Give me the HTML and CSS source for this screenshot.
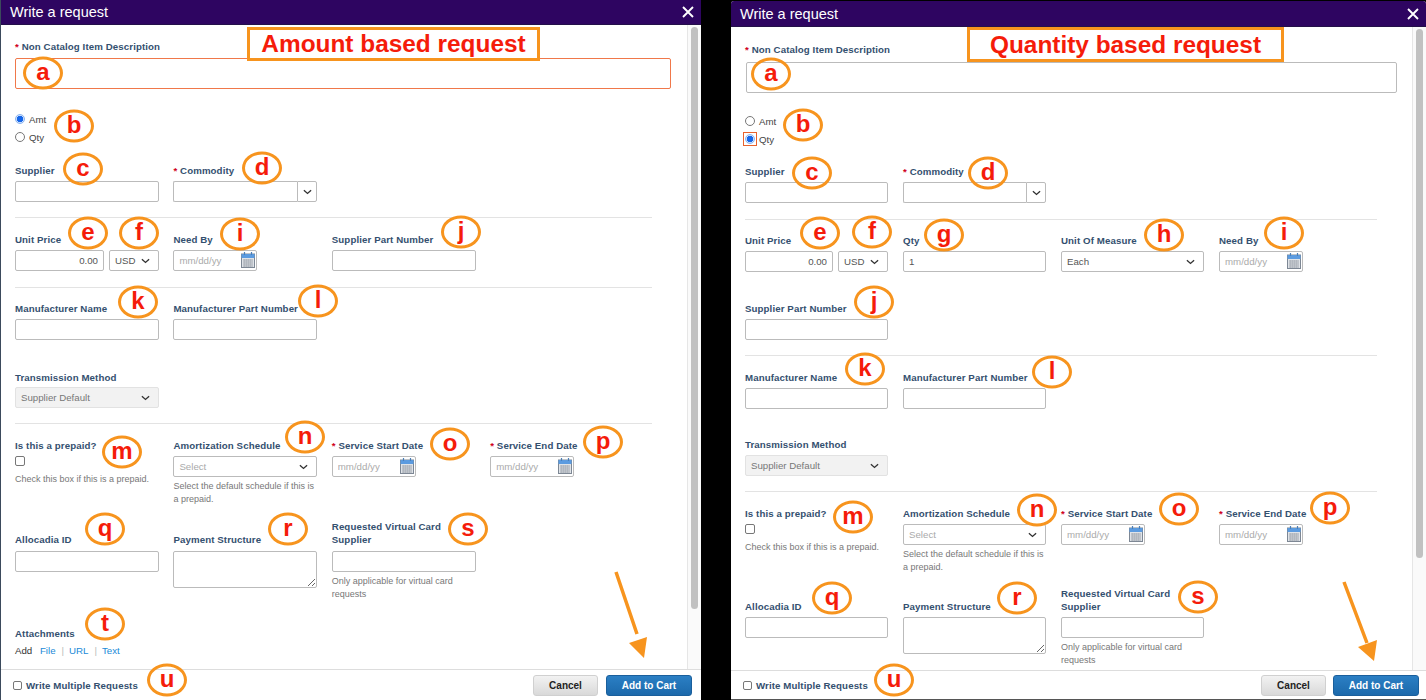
FILE: index.html
```html
<!DOCTYPE html>
<html lang="en">

<head>
  <meta charset="UTF-8">
  <title>Write a request</title>
  <link rel="stylesheet" href="styles.css">
</head>

<body>
  <svg width="0" height="0" class="defs">
    <symbol id="chev" viewBox="0 0 10 6">
      <path d="M1 1l4 3.6L9 1" fill="none" stroke="#333" stroke-width="1.5" />
    </symbol>
    <symbol id="cal" viewBox="0 0 14 16">
      <rect x=".5" y="2" width="13" height="13.5" fill="#dfe3e8" stroke="#7d8794" />
      <rect x=".5" y="2" width="13" height="4" fill="#5b9be0" />
      <path d="M3.5 0v3M10.5 0v3" stroke="#4a7fb8" stroke-width="1.2" />
      <path d="M2.5 8h9M2.5 10h9M2.5 12h9M2.5 14h9" stroke="#5c6570" stroke-dasharray="1.2 .8" />
    </symbol>
    <symbol id="x" viewBox="0 0 12 12">
      <path d="M1 1l10 10M11 1L1 11" fill="none" stroke="#fff" stroke-width="1.9" />
    </symbol>
  </svg>

  <div class="desk">
    <!-- amount based -->
    <section class="win win-left">
      <header class="win-head"><span>Write a request</span><svg class="close" width="12" height="12"><use href="#x" /></svg></header>
      <div class="win-body">
        <form class="form">
          <div class="field-wide">
            <label class="lbl"><i>*</i> Non Catalog Item Description</label>
            <input class="txt big err" type="text">
          </div>
          <div class="radios">
            <label><input type="radio" name="t1" checked> Amt</label>
            <label><input type="radio" name="t1"> Qty</label>
          </div>
          <div class="row r-supplier">
            <div class="field"><label class="lbl">Supplier</label><input class="txt" type="text"></div>
            <div class="field"><label class="lbl"><i>*</i> Commodity</label>
              <div class="combo"><input class="txt" type="text"><span class="combo-btn"><svg width="9" height="6"><use href="#chev" /></svg></span></div>
            </div>
          </div>
          <hr>
          <div class="row">
            <div class="field price">
              <label class="lbl">Unit Price</label>
              <div class="price-row"><input class="txt num" type="text" value="0.00">
                <div class="sel cur">USD<svg width="9" height="6"><use href="#chev" /></svg></div>
              </div>
            </div>
            <div class="field"><label class="lbl">Need By</label>
              <div class="date"><input class="txt" type="text" placeholder="mm/dd/yy"><svg width="14" height="16"><use href="#cal" /></svg></div>
            </div>
            <div class="field"><label class="lbl">Supplier Part Number</label><input class="txt" type="text"></div>
          </div>
          <hr class="hr-more">
          <div class="row snug">
            <div class="field"><label class="lbl">Manufacturer Name</label><input class="txt" type="text"></div>
            <div class="field"><label class="lbl">Manufacturer Part Number</label><input class="txt" type="text"></div>
          </div>
          <div class="row wide-gap">
            <div class="field"><label class="lbl tight">Transmission Method</label>
              <div class="sel off">Supplier Default<svg width="9" height="6"><use href="#chev" /></svg></div>
            </div>
          </div>
          <hr>
          <div class="row">
            <div class="field"><label class="lbl">Is this a prepaid?</label>
              <input class="check" type="checkbox">
              <p class="help">Check this box if this is a prepaid.</p>
            </div>
            <div class="field"><label class="lbl">Amortization Schedule</label>
              <div class="sel hint">Select<svg width="9" height="6"><use href="#chev" /></svg></div>
              <p class="help">Select the default schedule if this is a prepaid.</p>
            </div>
            <div class="field"><label class="lbl"><i>*</i> Service Start Date</label>
              <div class="date"><input class="txt" type="text" placeholder="mm/dd/yy"><svg width="14" height="16"><use href="#cal" /></svg></div>
            </div>
            <div class="field"><label class="lbl"><i>*</i> Service End Date</label>
              <div class="date"><input class="txt" type="text" placeholder="mm/dd/yy"><svg width="14" height="16"><use href="#cal" /></svg></div>
            </div>
          </div>
          <div class="row tall">
            <div class="field"><label class="lbl">Allocadia ID</label><input class="txt" type="text"></div>
            <div class="field"><label class="lbl">Payment Structure</label><textarea class="area"></textarea></div>
            <div class="field"><label class="lbl">Requested Virtual Card Supplier</label><input class="txt" type="text">
              <p class="help">Only applicable for virtual card requests</p>
            </div>
          </div>
          <div class="attach">
            <label class="lbl">Attachments</label>
            <p class="attach-links">Add <a href="#">File</a><b>|</b><a href="#">URL</a><b>|</b><a href="#">Text</a></p>
          </div>
        </form>
        <aside class="track"><div class="thumb"></div></aside>
      </div>
      <footer class="win-foot">
        <label class="multi"><input class="check" type="checkbox"> Write Multiple Requests</label>
        <div class="btns"><button class="btn" type="button">Cancel</button><button class="btn primary" type="button">Add to Cart</button></div>
      </footer>
    </section>

    <!-- quantity based -->
    <section class="win win-right">
      <header class="win-head"><span>Write a request</span><svg class="close" width="12" height="12"><use href="#x" /></svg></header>
      <div class="win-body">
        <form class="form">
          <div class="field-wide">
            <label class="lbl"><i>*</i> Non Catalog Item Description</label>
            <input class="txt big" type="text">
          </div>
          <div class="radios">
            <label><input type="radio" name="t2"> Amt</label>
            <label><span class="focus-box"><input type="radio" name="t2" checked></span> Qty</label>
          </div>
          <div class="row r-supplier">
            <div class="field"><label class="lbl">Supplier</label><input class="txt" type="text"></div>
            <div class="field"><label class="lbl"><i>*</i> Commodity</label>
              <div class="combo"><input class="txt" type="text"><span class="combo-btn"><svg width="9" height="6"><use href="#chev" /></svg></span></div>
            </div>
          </div>
          <hr class="hr-more">
          <div class="row snug">
            <div class="field price">
              <label class="lbl">Unit Price</label>
              <div class="price-row"><input class="txt num" type="text" value="0.00">
                <div class="sel cur">USD<svg width="9" height="6"><use href="#chev" /></svg></div>
              </div>
            </div>
            <div class="field"><label class="lbl">Qty</label><input class="txt" type="text" value="1"></div>
            <div class="field"><label class="lbl">Unit Of Measure</label>
              <div class="sel">Each<svg width="9" height="6"><use href="#chev" /></svg></div>
            </div>
            <div class="field"><label class="lbl">Need By</label>
              <div class="date"><input class="txt" type="text" placeholder="mm/dd/yy"><svg width="14" height="16"><use href="#cal" /></svg></div>
            </div>
          </div>
          <div class="row wide-gap">
            <div class="field"><label class="lbl">Supplier Part Number</label><input class="txt" type="text"></div>
          </div>
          <hr>
          <div class="row">
            <div class="field"><label class="lbl">Manufacturer Name</label><input class="txt" type="text"></div>
            <div class="field"><label class="lbl">Manufacturer Part Number</label><input class="txt" type="text"></div>
          </div>
          <div class="row mid-gap">
            <div class="field"><label class="lbl">Transmission Method</label>
              <div class="sel off">Supplier Default<svg width="9" height="6"><use href="#chev" /></svg></div>
            </div>
          </div>
          <hr>
          <div class="row">
            <div class="field"><label class="lbl">Is this a prepaid?</label>
              <input class="check" type="checkbox">
              <p class="help">Check this box if this is a prepaid.</p>
            </div>
            <div class="field"><label class="lbl">Amortization Schedule</label>
              <div class="sel hint">Select<svg width="9" height="6"><use href="#chev" /></svg></div>
              <p class="help">Select the default schedule if this is a prepaid.</p>
            </div>
            <div class="field"><label class="lbl"><i>*</i> Service Start Date</label>
              <div class="date"><input class="txt" type="text" placeholder="mm/dd/yy"><svg width="14" height="16"><use href="#cal" /></svg></div>
            </div>
            <div class="field"><label class="lbl"><i>*</i> Service End Date</label>
              <div class="date"><input class="txt" type="text" placeholder="mm/dd/yy"><svg width="14" height="16"><use href="#cal" /></svg></div>
            </div>
          </div>
          <div class="row tall">
            <div class="field"><label class="lbl">Allocadia ID</label><input class="txt" type="text"></div>
            <div class="field"><label class="lbl">Payment Structure</label><textarea class="area"></textarea></div>
            <div class="field"><label class="lbl">Requested Virtual Card Supplier</label><input class="txt" type="text">
              <p class="help">Only applicable for virtual card requests</p>
            </div>
          </div>
        </form>
        <aside class="track"><div class="thumb"></div></aside>
      </div>
      <footer class="win-foot">
        <label class="multi"><input class="check" type="checkbox"> Write Multiple Requests</label>
        <div class="btns"><button class="btn" type="button">Cancel</button><button class="btn primary" type="button">Add to Cart</button></div>
      </footer>
    </section>

    <!-- annotations drawn over the screenshots -->
    <div class="banner ban-left">Amount based request</div>
    <div class="banner ban-right">Quantity based request</div>

    <span class="mark la">a</span><span class="mark lb">b</span><span class="mark lc">c</span><span class="mark ld">d</span>
    <span class="mark le">e</span><span class="mark lf">f</span><span class="mark li">i</span><span class="mark lj">j</span>
    <span class="mark lk">k</span><span class="mark ll">l</span><span class="mark lm">m</span><span class="mark ln">n</span>
    <span class="mark lo">o</span><span class="mark lp">p</span><span class="mark lq">q</span><span class="mark lr">r</span>
    <span class="mark ls">s</span><span class="mark lt">t</span><span class="mark lu">u</span>

    <span class="mark ra">a</span><span class="mark rb">b</span><span class="mark rc">c</span><span class="mark rd">d</span>
    <span class="mark re">e</span><span class="mark rf">f</span><span class="mark rg">g</span><span class="mark rh">h</span>
    <span class="mark ri">i</span><span class="mark rj">j</span><span class="mark rk">k</span><span class="mark rl">l</span>
    <span class="mark rm">m</span><span class="mark rn">n</span><span class="mark ro">o</span><span class="mark rp">p</span>
    <span class="mark rq">q</span><span class="mark rr">r</span><span class="mark rs">s</span><span class="mark ru">u</span>

    <svg class="arrows" width="1426" height="700">
      <path d="M616 572L637 634M1344 582L1367 643" stroke="#f7941e" stroke-width="3.5" fill="none" />
      <path d="M644 658L629 643L647 637zM1374 661L1358 647L1377 640z" fill="#f7941e" />
    </svg>
  </div>
</body>

</html>
```

FILE: styles.css
```css
* {
  box-sizing: border-box;
}

body {
  margin: 0;
  background: #000;
  font-family: "Liberation Sans", Arial, sans-serif;
  overflow: hidden;
}

.defs {
  position: absolute;
}

.desk {
  position: relative;
  display: flex;
  width: 1426px;
  height: 700px;
  background: #000;
  overflow: hidden;
}

/* windows */
.win {
  display: flex;
  flex-direction: column;
  background: #fff;
  overflow: hidden;
}

.win-left {
  width: 700px;
  height: 700px;
  margin-left: 1px;
  margin-right: 30px;
  box-shadow: -1px 0 0 #3b4a5c;
}

.win-right {
  width: 695px;
  height: 699px;
  margin-top: 1px;
  border-radius: 3px 3px 0 0;
}

.win-head {
  flex: none;
  display: flex;
  justify-content: space-between;
  align-items: center;
  height: 25px;
  padding: 0 7px 0 9px;
  background: #2e0561;
  border-bottom: 1px solid #241049;
  color: #fff;
  font-size: 14.5px;
}

.win-right .win-head {
  height: 26px;
}

.win-body {
  flex: 1;
  display: flex;
  min-height: 0;
}

.form {
  flex: 1;
  min-width: 0;
  padding: 15px 0 0 14px;
  overflow: hidden;
}

.win-right .form {
  padding-top: 16px;
}

.track {
  flex: none;
  width: 14px;
  padding: 2px 3px 0;
  background: #fafafa;
  border-left: 1px solid #e6e6e6;
}

.thumb {
  width: 7px;
  height: 582px;
  background: #c1c1c1;
  border-radius: 4px;
}

.win-right .thumb {
  height: 529px;
}

/* fields */
.lbl {
  display: block;
  margin-bottom: 4px;
  color: #34506f;
  font-size: 9.7px;
  font-weight: bold;
  line-height: 13px;
  letter-spacing: .1px;
}

.lbl i {
  color: #d0021b;
  font-style: normal;
}

.lbl.tight {
  margin-bottom: 3px;
}

.txt,
.sel,
.area {
  display: block;
  width: 100%;
  height: 21px;
  padding: 0 5px;
  background: #fff;
  border: 1px solid #bbb;
  border-radius: 2px;
  color: #555;
  font-family: inherit;
  font-size: 9.7px;
}

.txt::placeholder {
  color: #aaa;
}

.big {
  width: calc(100% - 16px);
  height: 31px;
  margin-top: 5px;
}

.win-right .big {
  width: calc(100% - 16px);
  margin-top: 6px;
  margin-left: 1px;
}

.err {
  border-color: #f0784a;
}

.num {
  text-align: right;
}

.sel {
  display: flex;
  justify-content: space-between;
  align-items: center;
}

.sel svg {
  margin-right: 3px;
}

.off {
  background: #f2f2f2;
  border-color: #e2e2e2;
  color: #777;
}

.hint {
  color: #aaa;
}

.area {
  height: 37px;
  padding: 3px;
}

.radios {
  display: flex;
  flex-direction: column;
  margin-top: 21px;
  color: #444;
  font-size: 9.7px;
}

.win-right .radios {
  margin-top: 19px;
}

.radios label {
  display: flex;
  align-items: center;
  gap: 4px;
  height: 18px;
}

input[type="radio"] {
  appearance: none;
  width: 10px;
  height: 10px;
  margin: 0;
  border: 1px solid #777;
  border-radius: 50%;
  background: #fff;
}

input[type="radio"]:checked {
  border-color: #8ab4f0;
  background: radial-gradient(circle, #1667ea 0 3px, #cfe0fb 3.5px);
}

.focus-box {
  display: inline-flex;
  align-items: center;
  justify-content: center;
  width: 12px;
  height: 12px;
  margin: 0 -1px;
  outline: 1px solid #e8622c;
}

.check {
  appearance: none;
  display: block;
  width: 10px;
  height: 10px;
  margin: 0;
  background: #fff;
  border: 1px solid #777;
  border-radius: 2px;
}

.help {
  margin: 3px 0 0;
  color: #777;
  font-size: 9px;
  line-height: 12.5px;
}

.field > .check + .help {
  margin-top: 7px;
}

.row {
  display: flex;
  gap: 14.4px;
  margin-top: 15px;
}

.win-right .row {
  gap: 15px;
}

.win-right .field {
  width: 143px;
}

.row.r-supplier {
  margin-top: 18px;
}

.win-right .row.r-supplier {
  margin-top: 17px;
}

.row.snug {
  margin-top: 14px;
}

.row.wide-gap {
  margin-top: 30px;
}

.win-left .row.wide-gap {
  margin-top: 31px;
}

.row.mid-gap {
  margin-top: 29px;
}

.row.tall {
  margin-top: 15px;
}

.win-right .row.tall {
  margin-top: 14px;
}

.tall .lbl {
  display: flex;
  align-items: flex-end;
  height: 26px;
}

.win-left .tall .lbl {
  margin-bottom: 5px;
}

.field {
  flex: none;
  width: 144px;
}

.combo {
  display: flex;
}

.combo .txt {
  border-right: 0;
  border-radius: 2px 0 0 2px;
}

.combo-btn {
  flex: none;
  display: flex;
  align-items: center;
  justify-content: center;
  width: 20px;
  border: 1px solid #bbb;
  border-radius: 0 2px 2px 0;
}

.date {
  position: relative;
  width: 84px;
}

.date svg {
  position: absolute;
  top: 2px;
  right: 2px;
}

.price-row {
  display: flex;
  gap: 5px;
}

.num {
  flex: 1;
  min-width: 0;
}

.cur {
  flex: none;
  width: 50px;
}

hr {
  height: 1px;
  margin: 15px 35px 0 0;
  background: #e3e3e3;
  border: 0;
}

hr.hr-more {
  margin-top: 16px;
}

.attach {
  margin-top: 27px;
}

.attach-links {
  margin: 0;
  color: #333;
  font-size: 9.7px;
  line-height: 14px;
}

.attach-links a {
  margin-left: 5px;
  color: #1a8ad8;
  text-decoration: none;
}

.attach-links b {
  margin-left: 6px;
  color: #bbb;
  font-weight: normal;
}

/* footer */
.win-foot {
  flex: none;
  display: flex;
  justify-content: space-between;
  align-items: center;
  height: 31px;
  padding: 0 9px 0 12px;
  border-top: 1px solid #ddd;
  background: #fff;
}

.win-right .win-foot {
  height: 30px;
  padding-left: 12px;
  padding-right: 7px;
  border-bottom: 1px solid #555;
}

.multi {
  display: flex;
  align-items: center;
  gap: 4px;
  color: #34506f;
  font-size: 9.7px;
  font-weight: bold;
  letter-spacing: .1px;
}

.multi .check {
  width: 9px;
  height: 9px;
}

.btns {
  display: flex;
  gap: 8px;
}

.win-right .btns {
  gap: 7px;
}

.btn {
  width: 65px;
  height: 21px;
  padding: 0;
  background: linear-gradient(#f2f2f2, #d9d9d9);
  border: 1px solid #d0d0d0;
  border-radius: 3px;
  color: #222;
  font-family: inherit;
  font-size: 10px;
  font-weight: bold;
}

.primary {
  width: 86px;
  background: linear-gradient(#2b7fc4, #1c69ab);
  border-color: #1a5f9c;
  color: #fff;
}

/* annotations */
.banner {
  position: absolute;
  display: flex;
  align-items: center;
  justify-content: center;
  border: 3px solid #f7941e;
  background: #fff;
  color: #f51c0a;
  font-size: 24.4px;
  font-weight: bold;
}

.ban-left {
  left: 247px;
  top: 27px;
  width: 293px;
  height: 34px;
}

.ban-right {
  left: 967px;
  top: 27px;
  width: 317px;
  height: 35px;
}

.mark {
  position: absolute;
  display: flex;
  align-items: center;
  justify-content: center;
  width: 40px;
  height: 33px;
  padding-bottom: 3px;
  transform: translate(-50%, -50%);
  border: 3px solid #f7941e;
  border-radius: 50%;
  color: #f51c0a;
  font-size: 24px;
  font-weight: bold;
}

.arrows {
  position: absolute;
  left: 0;
  top: 0;
}

/* annotation places, left window */
.la { left: 43px; top: 73px; }
.lb { left: 74px; top: 126px; }
.lc { left: 83px; top: 169px; }
.ld { left: 262px; top: 168px; }
.le { left: 88px; top: 233px; }
.lf { left: 139px; top: 233px; }
.li { left: 240px; top: 234px; }
.lj { left: 461px; top: 232px; }
.lk { left: 138px; top: 302px; }
.ll { left: 318px; top: 301px; }
.lm { left: 122px; top: 452px; }
.ln { left: 305px; top: 437px; }
.lo { left: 450px; top: 444px; }
.lp { left: 603px; top: 442px; }
.lq { left: 105px; top: 529px; }
.lr { left: 288px; top: 529px; }
.ls { left: 468px; top: 529px; }
.lt { left: 105px; top: 624px; }
.lu { left: 167px; top: 680px; }

/* annotation places, right window */
.ra { left: 771px; top: 74px; }
.rb { left: 803px; top: 125px; }
.rc { left: 812px; top: 173px; }
.rd { left: 988px; top: 173px; }
.re { left: 820px; top: 233px; }
.rf { left: 872px; top: 232px; }
.rg { left: 944px; top: 235px; }
.rh { left: 1164px; top: 235px; }
.ri { left: 1284px; top: 233px; }
.rj { left: 874px; top: 302px; }
.rk { left: 865px; top: 369px; }
.rl { left: 1052px; top: 372px; }
.rm { left: 853px; top: 517px; }
.rn { left: 1037px; top: 510px; }
.ro { left: 1179px; top: 509px; }
.rp { left: 1330px; top: 508px; }
.rq { left: 832px; top: 598px; }
.rr { left: 1017px; top: 598px; }
.rs { left: 1198px; top: 597px; }
.ru { left: 894px; top: 680px; }
```
